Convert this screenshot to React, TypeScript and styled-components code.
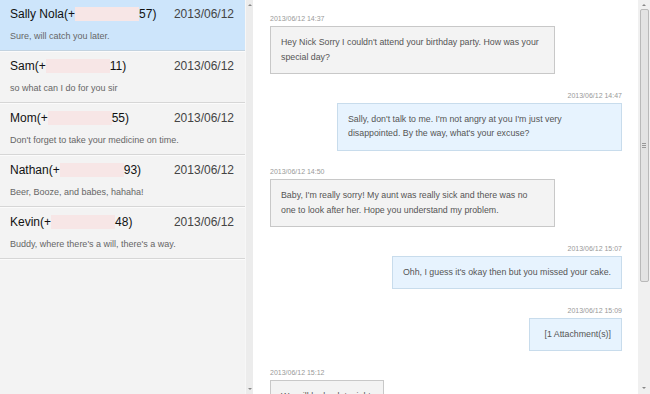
import React from 'react';
import styled, { createGlobalStyle } from 'styled-components';

const GlobalStyle = createGlobalStyle`
  html, body {
    margin: 0;
    padding: 0;
    background: #ffffff;
  }
  body {
    font-family: Arial, "Liberation Sans", sans-serif;
  }
`;

const Page = styled.div`
  display: flex;
  width: 650px;
  height: 394px;
  overflow: hidden;
  background: #ffffff;
`;

const Sidebar = styled.div`
  width: 245px;
  flex-shrink: 0;
  background: #f3f3f3;
  display: flex;
  flex-direction: column;
`;

const Contact = styled.div<{ active?: boolean }>`
  display: flex;
  flex-direction: column;
  height: 51px;
  box-sizing: border-box;
  padding: 7px 11px 0 10px;
  background: ${({ active }) => (active ? '#cde5fb' : '#f3f3f3')};
  border-bottom: 1px solid ${({ active }) => (active ? '#c3d3e0' : '#d6d6d6')};
  box-shadow: 0 1px 0 #fbfbfb;
  margin-bottom: 1px;
`;

const ContactTop = styled.div`
  display: flex;
  justify-content: space-between;
  font-size: 12px;
  line-height: 14px;
`;

const ContactName = styled.span`
  color: #111111;
`;

const Redacted = styled.span`
  display: inline-block;
  width: 64px;
  height: 14px;
  vertical-align: top;
  background: #f7e6e6;
`;

const ContactDate = styled.span`
  color: #444444;
`;

const Preview = styled.div`
  margin-top: 9px;
  font-size: 9px;
  line-height: 12px;
  color: #666666;
`;

const Strip = styled.div`
  width: 8px;
  flex-shrink: 0;
  background: #ececec;
  border-left: 1px solid #f7f7f7;
  display: flex;
  flex-direction: column;
  justify-content: space-between;
  align-items: center;
  padding: 4px 0;
  box-sizing: border-box;
`;

const Arrow = styled.span<{ down?: boolean }>`
  width: 0;
  height: 0;
  border-left: 2px solid transparent;
  border-right: 2px solid transparent;
  ${({ down }) =>
    down ? 'border-top: 2px solid #888;' : 'border-bottom: 2px solid #888;'}
`;

const Chat = styled.div`
  flex: 1;
  padding: 14px 16px 0 17px;
  display: flex;
  flex-direction: column;
  gap: 16.5px;
  overflow: hidden;
`;

const Message = styled.div<{ mine?: boolean }>`
  display: flex;
  flex-direction: column;
  align-items: ${({ mine }) => (mine ? 'flex-end' : 'flex-start')};
`;

const Stamp = styled.div`
  font-size: 7px;
  line-height: 9px;
  color: #999999;
  margin-bottom: 3px;
`;

const Bubble = styled.div<{ mine?: boolean; padLeft?: number }>`
  max-width: 263px;
  padding: 8px 10px 9px ${({ padLeft }) => padLeft ?? 10}px;
  font-size: 8.8px;
  line-height: 14.5px;
  color: #555555;
  background: ${({ mine }) => (mine ? '#e7f3fe' : '#f3f3f3')};
  border: 1px solid ${({ mine }) => (mine ? '#c8dcec' : '#c8c8c8')};
`;

const Scrollbar = styled.div`
  width: 12px;
  flex-shrink: 0;
  background: #f0f0f0;
  display: flex;
  flex-direction: column;
  align-items: center;
  padding: 4px 0 5px;
  box-sizing: border-box;
`;

const Thumb = styled.div`
  width: 9px;
  height: 273px;
  margin: 3px 0 auto;
  box-sizing: border-box;
  background: #e3e3e3;
  border: 1px solid #b9b9b9;
  border-radius: 2px;
  display: flex;
  align-items: center;
  justify-content: center;
`;

const Grip = styled.div`
  width: 4px;
  height: 5px;
  background: repeating-linear-gradient(#999 0 1px, transparent 1px 2px);
`;

const contacts = [
  { name: 'Sally Nola(+', end: '57)', text: 'Sure, will catch you later.', active: true },
  { name: 'Sam(+', end: '11)', text: 'so what can I do for you sir' },
  { name: 'Mom(+', end: '55)', text: "Don't forget to take your medicine on time." },
  { name: 'Nathan(+', end: '93)', text: 'Beer, Booze, and babes, hahaha!' },
  { name: 'Kevin(+', end: '48)', text: "Buddy, where there's a will, there's a way." },
];

const messages = [
  {
    at: '2013/06/12 14:37',
    text: "Hey Nick Sorry I couldn't attend your birthday party. How was your special day?",
  },
  {
    at: '2013/06/12 14:47',
    mine: true,
    text: "Sally, don't talk to me. I'm not angry at you I'm just very disappointed. By the way, what's your excuse?",
  },
  {
    at: '2013/06/12 14:50',
    text: "Baby, I'm really sorry! My aunt was really sick and there was no one to look after her. Hope you understand my problem.",
  },
  {
    at: '2013/06/12 15:07',
    mine: true,
    text: "Ohh, I guess it's okay then but you missed your cake.",
  },
  { at: '2013/06/12 15:09', mine: true, text: '[1 Attachment(s)]', padLeft: 15 },
  { at: '2013/06/12 15:12', text: 'We will be back tonight.' },
];

const App = () => {
  return (
    <>
      <GlobalStyle />
      <Page>
        <Sidebar>
          {contacts.map((c) => (
            <Contact key={c.name} active={c.active}>
              <ContactTop>
                <ContactName>
                  {c.name}
                  <Redacted />
                  {c.end}
                </ContactName>
                <ContactDate>2013/06/12</ContactDate>
              </ContactTop>
              <Preview>{c.text}</Preview>
            </Contact>
          ))}
        </Sidebar>
        <Strip>
          <Arrow />
          <Arrow down />
        </Strip>
        <Chat>
          {messages.map((m) => (
            <Message key={m.at} mine={m.mine}>
              <Stamp>{m.at}</Stamp>
              <Bubble mine={m.mine} padLeft={m.padLeft}>
                {m.text}
              </Bubble>
            </Message>
          ))}
        </Chat>
        <Scrollbar>
          <Arrow />
          <Thumb>
            <Grip />
          </Thumb>
          <Arrow down />
        </Scrollbar>
      </Page>
    </>
  );
};

export default App;
